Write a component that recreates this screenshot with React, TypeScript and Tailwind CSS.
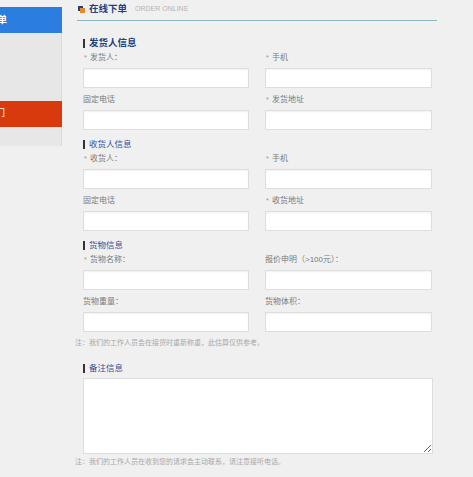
import React from "react";

const FONT = { fontFamily: '"Liberation Sans", "Noto Sans CJK SC", sans-serif' };

function Field({ label, star }: { label: string; star?: boolean }) {
  return (
    <div className="flex flex-col w-full">
      <div className="h-[12px] leading-[12px] text-[8px] text-[#7a7a7a] flex items-center">
        {star ? (
          <>
            <span className="w-[7px] text-[#999] text-[7px] pl-[1px]">*</span>
            <span>{label}</span>
          </>
        ) : (
          <span>{label}</span>
        )}
      </div>
      <div className="mt-[4px] h-[20px] bg-white border border-[#dedede] shadow-[inset_0_1px_2px_rgba(0,0,0,0.06)]" />
    </div>
  );
}

function Title({ text, bold }: { text: string; bold?: boolean }) {
  return (
    <div className="h-[14px] flex items-center">
      <span className="w-[2px] h-[9px] bg-[#333]" />
      <span
        className={
          bold
            ? "ml-[4px] text-[9.5px] font-bold text-[#24407c] leading-[14px]"
            : "ml-[4px] text-[8.5px] text-[#3d4f93] leading-[14px]"
        }
      >
        {text}
      </span>
    </div>
  );
}

function Grid({ items }: { items: [string, boolean][] }) {
  return (
    <div className="grid grid-cols-[166px_167px] gap-x-[16px] gap-y-[6px] mt-[2px]">
      {items.map(([l, s], i) => (
        <Field key={i} label={l} star={s} />
      ))}
    </div>
  );
}

export default function App() {
  return (
    <div className="w-[473px] h-[477px] bg-[#f0f0f0] flex overflow-hidden" style={FONT}>
      {/* sidebar */}
      <div className="w-[62px] shrink-0 pt-[7px] flex flex-col">
        <div className="h-[26px] bg-[#2b7ddf] overflow-hidden flex items-center">
          <span className="ml-[-31px] whitespace-nowrap text-white text-[9.5px] font-bold">在线下单</span>
        </div>
        <div className="h-[68px] bg-[#e7e7e7] border-r border-[#dadada]" />
        <div className="h-[26px] bg-[#d83a0e] overflow-hidden flex items-center">
          <span className="ml-[-31px] whitespace-nowrap text-white text-[9px]">联系部门</span>
        </div>
        <div className="h-[19px] bg-[#e7e7e7] border-r border-[#dadada]" />
      </div>

      {/* main */}
      <div className="ml-[13px] w-[362px] flex flex-col">
        <div className="ml-[2px] h-[21px] border-b border-[#8bb9bf] flex items-center pb-[2px]">
          <svg width="7" height="8" viewBox="0 0 7 8" className="ml-[1px]">
            <rect x="0" y="1" width="5" height="5" fill="#2a3f7a" />
            <rect x="2" y="3" width="5" height="5" fill="#e8862a" />
          </svg>
          <span className="ml-[4px] text-[9.5px] font-bold text-[#24407c]">在线下单</span>
          <span className="ml-[8px] text-[7px] text-[#b5b5b5]">ORDER ONLINE</span>
        </div>

        <div className="pl-[8px] mt-[15px]">
          <Title text="发货人信息" bold />
          <Grid
            items={[
              ["发货人：", true],
              ["手机", true],
              ["固定电话", false],
              ["发货地址", true],
            ]}
          />
          <div className="mt-[7px]">
            <Title text="收货人信息" />
          </div>
          <Grid
            items={[
              ["收货人：", true],
              ["手机", true],
              ["固定电话", false],
              ["收货地址", true],
            ]}
          />
          <div className="mt-[7px]">
            <Title text="货物信息" />
          </div>
          <Grid
            items={[
              ["货物名称：", true],
              ["报价申明（>100元）：", false],
              ["货物重量：", false],
              ["货物体积：", false],
            ]}
          />
        </div>
        <div className="mt-[5px] h-[12px] leading-[12px] text-[7px] text-[#a8a8a8]">
          注：我们的工作人员会在接货时重新称重，此估算仅供参考。
        </div>
        <div className="pl-[8px] mt-[12px]">
          <Title text="备注信息" />
          <textarea className="mt-[3px] block w-[350px] h-[76px] bg-white border border-[#dedede] resize-y outline-none" />
        </div>
        <div className="mt-[2px] h-[12px] leading-[12px] text-[7px] text-[#a8a8a8]">
          注：我们的工作人员在收到您的请求会主动联系，请注意接听电话。
        </div>
      </div>
    </div>
  );
}
